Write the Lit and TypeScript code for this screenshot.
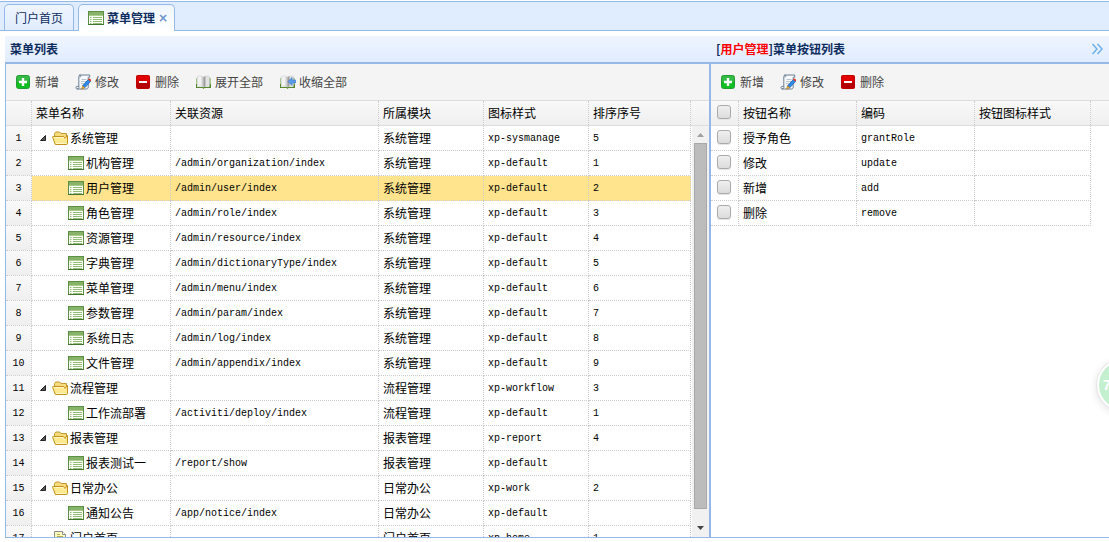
import { LitElement, html, css, svg, nothing } from "lit";
import { customElement, state, property } from "lit/decorators.js";

type MenuRow = {
  name: string;
  kind: "folder" | "item" | "page";
  url?: string;
  module: string;
  icon: string;
  sort?: string;
};

const MENUS: MenuRow[] = [
  { name: "系统管理", kind: "folder", module: "系统管理", icon: "xp-sysmanage", sort: "5" },
  { name: "机构管理", kind: "item", url: "/admin/organization/index", module: "系统管理", icon: "xp-default", sort: "1" },
  { name: "用户管理", kind: "item", url: "/admin/user/index", module: "系统管理", icon: "xp-default", sort: "2" },
  { name: "角色管理", kind: "item", url: "/admin/role/index", module: "系统管理", icon: "xp-default", sort: "3" },
  { name: "资源管理", kind: "item", url: "/admin/resource/index", module: "系统管理", icon: "xp-default", sort: "4" },
  { name: "字典管理", kind: "item", url: "/admin/dictionaryType/index", module: "系统管理", icon: "xp-default", sort: "5" },
  { name: "菜单管理", kind: "item", url: "/admin/menu/index", module: "系统管理", icon: "xp-default", sort: "6" },
  { name: "参数管理", kind: "item", url: "/admin/param/index", module: "系统管理", icon: "xp-default", sort: "7" },
  { name: "系统日志", kind: "item", url: "/admin/log/index", module: "系统管理", icon: "xp-default", sort: "8" },
  { name: "文件管理", kind: "item", url: "/admin/appendix/index", module: "系统管理", icon: "xp-default", sort: "9" },
  { name: "流程管理", kind: "folder", module: "流程管理", icon: "xp-workflow", sort: "3" },
  { name: "工作流部署", kind: "item", url: "/activiti/deploy/index", module: "流程管理", icon: "xp-default", sort: "1" },
  { name: "报表管理", kind: "folder", module: "报表管理", icon: "xp-report", sort: "4" },
  { name: "报表测试一", kind: "item", url: "/report/show", module: "报表管理", icon: "xp-default" },
  { name: "日常办公", kind: "folder", module: "日常办公", icon: "xp-work", sort: "2" },
  { name: "通知公告", kind: "item", url: "/app/notice/index", module: "日常办公", icon: "xp-default" },
  { name: "门户首页", kind: "page", module: "门户首页", icon: "xp-home", sort: "1" },
];

const BUTTONS = [
  { name: "授予角色", code: "grantRole" },
  { name: "修改", code: "update" },
  { name: "新增", code: "add" },
  { name: "删除", code: "remove" },
];

const book = svg`
  <path d="M1 4h1v9h12V4h2v10H9.500L8.500 15 7.500 14H1z" fill="#55882a"/>
  <path d="M1 4h1v6H1zM14.500 4H16v6h-1.500z" fill="#a9c98c"/>
  <path d="M2.500 2.500c2-.8 4-.7 6 .5v10c-1.500-1-4-1.200-6-.6z" fill="#f2f2f2" stroke="#c4c4c4" stroke-width=".5"/>
  <path d="M14.500 2.500c-2-.8-4-.7-6 .5v10c1.500-1 4-1.200 6-.6z" fill="#e4e4e4" stroke="#c0c0c0" stroke-width=".5"/>
  <path d="M6.500 2.500 8.500 3v10l-2-.7z" fill="#cfcfcf"/><path d="M8.500 3l2-.7v10l-2 .7z" fill="#9e9e9e"/>`;

const ICONS = {
  add: svg`
    <rect x="1.500" y="1.500" width="13" height="13" rx="2" fill="#34bb44" stroke="#239a35"/>
    <path d="M2 8h12v4.500a1.500 1.500 0 0 1-1.500 1.500h-9A1.500 1.500 0 0 1 2 12.500z" fill="#0fbe1f"/>
    <path d="M8 4v8M4 8h8" stroke="#fff" stroke-width="2.400"/>`,
  edit: svg`
    <path d="M4.500 1h10.200v2.200h-1.500V13c0 1.200-.6 2-1.700 2H2C.7 15 .6 12.500 2 12.400h1.800V3z" fill="#f7f9fb" stroke="#6b7f95"/>
    <path d="M4.500 1c1.700 0 1.700 2.200.2 2.200M2 15c2 0 2-1.600 2-2.600" fill="none" stroke="#6b7f95"/>
    <path d="M6.500 5.500h5M6 7.500h5M6 9.500h3" stroke="#b8c3cf"/>
    <path d="m7.500 11.800 5.800-6.300 2.200 2-5.800 6.300z" fill="#2f8bea" stroke="#1659a8" stroke-width=".7"/>
    <path d="m13 5.600 1-1c.8-.4 2.300.9 2 1.700l-.8 1.200z" fill="#e23b22"/>
    <path d="m7.500 11.800 2.200 2-3.200 1.400z" fill="#f7b733" stroke="#9b6415" stroke-width=".5"/>`,
  remove: svg`
    <rect x="1.500" y="1.500" width="13" height="13" rx="1" fill="#e00000" stroke="#c00000"/>
    <path d="M2 8h12v6H2z" fill="#b40000"/>
    <path d="M4 8h8" stroke="#fff" stroke-width="2"/>`,
  expand: book,
  collapse: svg`${book}<path d="M9 7.500 13 3.500v2.500h3.500v3H13v2.500z" fill="#5a9bea" stroke="#2f74c8" stroke-width=".6"/>`,
  item: svg`
    <rect x=".5" y="1.500" width="15" height="13" fill="#fbfef4" stroke="#5c8f46"/>
    <path d="M1 2h14v3H1z" fill="#86b368"/>
    <path d="M1 5.500h14" stroke="#a9cc8d"/>
    <path d="M2 7.500h1.500M2 9.500h1.500M2 11.500h1.500M2 13.500h1.500M5 7.500h9M5 9.500h9M5 11.500h9M5 13.500h9" stroke="#93bd78"/>
    <path d="M0 14.500h16" stroke="#41752c"/>`,
  folder: svg`
    <path d="M2.500 12V3.500l1.200-1.500h4l1.300 1.500h5.500V12z" fill="#f5d97a" stroke="#c19a35"/>
    <path d="M3.300 14.500.6 7.300c-.2-.5.100-.8.600-.8h9.800c.5 0 .8.200 1 .7l.8 1.300 2.700-3v8c0 .6-.4 1-1 1z" fill="#fce98f" stroke="#c4921c"/>
    <path d="M1.800 7.500h9.400l1.300 2.500M4 13.500h10" fill="none" stroke="#fff8c8"/>`,
  page: svg`
    <path d="M2.500 1.500h8l3 3v11h-11z" fill="#fdfbb8" stroke="#8b8b8b"/>
    <path d="M10.500 1.500v3h3" fill="#fff" stroke="#8b8b8b"/>
    <path d="M5 4.500h3M5 6.500h6M5 8.500h6M5 10.500h6" stroke="#b9a850"/>`,
};

@customElement("ui-icon")
class UiIcon extends LitElement {
  @property() name: keyof typeof ICONS = "add";

  static styles = css`
    :host { display: block; flex: none; width: 16px; height: 16px; }
    svg { display: block; width: 100%; height: 100%; overflow: visible; }
  `;

  render() {
    return html`<svg viewBox="0 0 16 16" aria-hidden="true">${ICONS[this.name]}</svg>`;
  }
}

@customElement("app-root")
class AppRoot extends LitElement {
  @state() private selected = 2;

  static styles = css`
    :host {
      display: flex;
      flex-direction: column;
      position: relative;
      height: 100vh;
      overflow: hidden;
      background: #fff;
      color: #000;
      font: 12px/16px "Noto Sans CJK SC", sans-serif;
    }
    * { box-sizing: border-box; }
    button {
      margin: 0;
      padding: 0;
      border: 0;
      background: none;
      color: inherit;
      font: inherit;
      cursor: pointer;
    }
    .tabs {
      display: flex;
      flex: none;
      align-items: flex-end;
      gap: 4px;
      height: 30px;
      margin-top: 1px;
      padding-left: 4px;
      border: solid #95b8e7;
      border-width: 1px 0;
      background: #e0ecff;
    }
    .tab {
      display: flex;
      align-items: center;
      height: 26px;
      padding: 0 10px;
      border: 1px solid #95b8e7;
      border-bottom: 0;
      border-radius: 5px 5px 0 0;
      background: linear-gradient(#eff5ff, #e0ecff);
      color: #0e2d5f;
    }
    .tab.active {
      gap: 3px;
      height: 27px;
      margin-bottom: -1px;
      padding: 0 6px 0 9px;
      background: linear-gradient(#eff5ff, #fff);
      font-weight: bold;
    }
    .tab .close { width: 10px; color: #6b93c8; font: bold 12px/16px "DejaVu Sans", sans-serif; }
    .layout { display: flex; flex: 1; min-height: 0; padding: 5px 0 4px 5px; }
    .panel {
      display: flex;
      flex-direction: column;
      min-width: 0;
      border-bottom: 1px solid #95b8e7;
    }
    .panel.menus { flex: 704 1 0; }
    .panel.actions { flex: 400 1 0; }
    .title {
      display: flex;
      flex: none;
      align-items: center;
      justify-content: space-between;
      height: 28px;
      padding: 0 6px 0 5px;
      border-bottom: 2px solid #95b8e7;
      background: linear-gradient(#eff5ff, #e0ecff);
      color: #0e2d5f;
    }
    .actions .title { padding-left: 7px; }
    h2 { margin: 0; font: inherit; font-weight: bold; }
    .target { color: #f00; }
    .more { display: block; width: 12px; height: 12px; }
    .more svg { display: block; }
    .content { display: flex; flex: 1; flex-direction: column; min-height: 0; border-left: 1px solid #95b8e7; }
    .actions .content { border-left-width: 2px; }
    .toolbar {
      display: flex;
      flex: none;
      align-items: center;
      gap: 16px;
      height: 37px;
      padding-left: 9px;
      border-bottom: 1px solid #ddd;
      background: #f4f4f4;
      color: #444;
    }
    .tool { display: flex; align-items: center; gap: 4px; }
    .head { flex: none; border-bottom: 1px solid #ddd; background: linear-gradient(#f9f9f9, #efefef); }
    .body { display: flex; flex: 1; min-height: 0; overflow: hidden; }
    .rows { flex: 1; min-width: 0; overflow: hidden; }
    table { table-layout: fixed; border-collapse: separate; border-spacing: 0; }
    .menus table { width: 685px; }
    .actions table { width: 380px; }
    th, td {
      height: 25px;
      padding: 0 4px;
      border: dotted #ccc;
      border-width: 0 1px 1px 0;
      text-align: left;
      font-weight: normal;
      white-space: nowrap;
      overflow: hidden;
    }
    th { height: 24px; border-bottom: 0; }
    .num { width: 26px; }
    .name { width: 139px; }
    .url { width: 208px; }
    .mod { width: 105px; }
    .ico { width: 105px; }
    .ord { width: 102px; }
    .chk { width: 28px; }
    .act { width: 118px; }
    .style { width: 116px; }
    .code { padding-top: 2px; font: 10px/16px "Liberation Mono", monospace; }
    td.num {
      padding: 2px 0 0;
      background: linear-gradient(#f9f9f9, #efefef);
      text-align: center;
    }
    .selected td:not(.num) { background: #ffe48d; }
    .node { display: flex; align-items: center; gap: 2px; }
    .node.page { padding-left: 16px; }
    .node.item { padding-left: 32px; }
    .toggle { width: 14px; height: 16px; flex: none; }
    .toggle svg { display: block; }
    input {
      appearance: none;
      display: block;
      width: 14px;
      height: 14px;
      margin: 0 0 2px 2px;
      border: 1px solid #aaa;
      border-radius: 3px;
      background: linear-gradient(#efefef, #dcdcdc);
      box-shadow: 0 1px 1px #e4e4e4;
    }
    .scroll {
      display: flex;
      flex: none;
      flex-direction: column;
      width: 17px;
      padding: 0 2px;
      background: #f1f1f1;
    }
    .scroll svg { display: block; flex: none; width: 13px; height: 17px; }
    .track { flex: 1; }
    .thumb { height: 97%; border: 1px solid #a8a8a8; background: #bcbcbc; }
    .bubble {
      position: absolute;
      top: 359px;
      right: -40px;
      width: 52px;
      height: 52px;
      padding-left: 4px;
      border: 2px solid #fff;
      border-radius: 50%;
      background: #c5f0cf;
      box-shadow: 0 0 0 1px #e4e4e4, 0 2px 8px #ddd;
      color: #fff;
      font: bold 14px/48px "Liberation Sans", sans-serif;
    }
  `;

  private tool(icon: string, label: string) {
    return html`<button class="tool"><ui-icon name=${icon}></ui-icon>${label}</button>`;
  }

  private menuRow(row: MenuRow, i: number) {
    return html`
      <tr class=${i === this.selected ? "selected" : ""} @click=${() => (this.selected = i)}>
        <td class="num code">${i + 1}</td>
        <td>
          <div class="node ${row.kind}">
            ${row.kind === "folder"
              ? html`<button class="toggle" aria-label="收缩">
                  <svg width="14" height="16" aria-hidden="true"><path d="M9.500 5.500v5h-5z" fill="#555" stroke="#222" /></svg>
                </button>`
              : nothing}
            <ui-icon name=${row.kind}></ui-icon>${row.name}
          </div>
        </td>
        <td class="code">${row.url}</td>
        <td>${row.module}</td>
        <td class="code">${row.icon}</td>
        <td class="code">${row.sort}</td>
      </tr>
    `;
  }

  render() {
    const menuCols = html`<colgroup>
      <col class="num" /><col class="name" /><col class="url" /><col class="mod" /><col class="ico" /><col class="ord" />
    </colgroup>`;
    const actionCols = html`<colgroup>
      <col class="chk" /><col class="act" /><col class="act" /><col class="style" />
    </colgroup>`;
    return html`
      <nav class="tabs">
        <div class="tab"><button>门户首页</button></div>
        <div class="tab active">
          <ui-icon name="item"></ui-icon><button>菜单管理</button><button class="close" aria-label="关闭">×</button>
        </div>
      </nav>
      <main class="layout">
        <section class="panel menus">
          <header class="title"><h2>菜单列表</h2></header>
          <div class="content">
            <div class="toolbar">
              ${this.tool("add", "新增")}${this.tool("edit", "修改")}${this.tool("remove", "删除")}
              ${this.tool("expand", "展开全部")}${this.tool("collapse", "收缩全部")}
            </div>
            <div class="head">
              <table>
                ${menuCols}
                <thead>
                  <tr><th></th><th>菜单名称</th><th>关联资源</th><th>所属模块</th><th>图标样式</th><th>排序序号</th></tr>
                </thead>
              </table>
            </div>
            <div class="body">
              <div class="rows">
                <table>
                  ${menuCols}
                  <tbody>${MENUS.map((row, i) => this.menuRow(row, i))}</tbody>
                </table>
              </div>
              <div class="scroll" aria-hidden="true">
                <svg viewBox="0 0 13 17"><path d="M3 11h7L6.500 7z" fill="#a0a0a0" /></svg>
                <div class="track"><div class="thumb"></div></div>
                <svg viewBox="0 0 13 17"><path d="M3 6h7l-3.500 4z" fill="#444" /></svg>
              </div>
            </div>
          </div>
        </section>
        <section class="panel actions">
          <header class="title">
            <h2>[<span class="target">用户管理</span>]菜单按钮列表</h2>
            <button class="more" aria-label="展开">
              <svg width="12" height="12" aria-hidden="true">
                <path d="m1.500 1 4.500 5-4.500 5M6.500 1 11 6l-4.500 5" fill="none" stroke="#6aaee8" stroke-width="1.400" />
              </svg>
            </button>
          </header>
          <div class="content">
            <div class="toolbar">${this.tool("add", "新增")}${this.tool("edit", "修改")}${this.tool("remove", "删除")}</div>
            <div class="head">
              <table>
                ${actionCols}
                <thead>
                  <tr><th><input type="checkbox" aria-label="全选" /></th><th>按钮名称</th><th>编码</th><th>按钮图标样式</th></tr>
                </thead>
              </table>
            </div>
            <div class="body">
              <div class="rows">
                <table>
                  ${actionCols}
                  <tbody>
                    ${BUTTONS.map(
                      (b) => html`<tr>
                        <td><input type="checkbox" aria-label=${b.name} /></td>
                        <td>${b.name}</td>
                        <td class="code">${b.code}</td>
                        <td></td>
                      </tr>`
                    )}
                  </tbody>
                </table>
              </div>
            </div>
          </div>
        </section>
      </main>
      <div class="bubble">7</div>
    `;
  }
}
